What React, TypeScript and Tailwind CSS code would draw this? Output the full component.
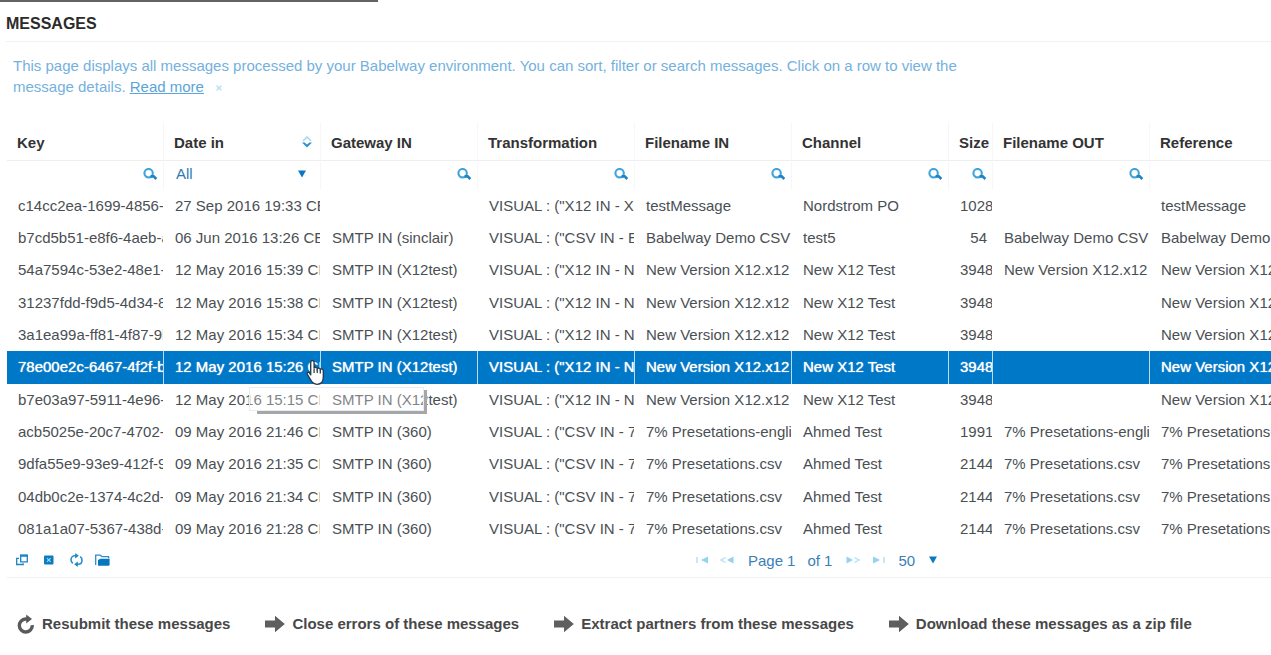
import React from "react";

type Message = {
  key: string;
  date: string;
  gateway: string;
  transformation: string;
  fileIn: string;
  channel: string;
  size: string;
  fileOut: string;
  reference: string;
};

const X12 = "New Version X12.x12";

function row(
  key: string,
  date: string,
  gateway: string,
  transformation: string,
  fileIn: string,
  channel: string,
  size: string,
  fileOut: string,
  reference: string,
): Message {
  return { key, date, gateway, transformation, fileIn, channel, size, fileOut, reference };
}

const messages: Message[] = [
  row("c14cc2ea-1699-4856-", "27 Sep 2016 19:33 CE", "", 'VISUAL : ("X12 IN - X', "testMessage", "Nordstrom PO", "1028", "", "testMessage"),
  row("b7cd5b51-e8f6-4aeb-a", "06 Jun 2016 13:26 CE", "SMTP IN (sinclair)", 'VISUAL : ("CSV IN - E', "Babelway Demo CSV", "test5", "54", "Babelway Demo CSV", "Babelway Demo"),
  row("54a7594c-53e2-48e1-", "12 May 2016 15:39 CE", "SMTP IN (X12test)", 'VISUAL : ("X12 IN - N', X12, "New X12 Test", "3948", X12, "New Version X12"),
  row("31237fdd-f9d5-4d34-8", "12 May 2016 15:38 CE", "SMTP IN (X12test)", 'VISUAL : ("X12 IN - N', X12, "New X12 Test", "3948", "", "New Version X12"),
  row("3a1ea99a-ff81-4f87-9b", "12 May 2016 15:34 CE", "SMTP IN (X12test)", 'VISUAL : ("X12 IN - N', X12, "New X12 Test", "3948", "", "New Version X12"),
  row("78e00e2c-6467-4f2f-b", "12 May 2016 15:26 CE", "SMTP IN (X12test)", 'VISUAL : ("X12 IN - N', X12, "New X12 Test", "3948", "", "New Version X12"),
  row("b7e03a97-5911-4e96-", "12 May 2016 15:15 CE", "SMTP IN (X12test)", 'VISUAL : ("X12 IN - N', X12, "New X12 Test", "3948", "", "New Version X12"),
  row("acb5025e-20c7-4702-", "09 May 2016 21:46 CE", "SMTP IN (360)", 'VISUAL : ("CSV IN - 7', "7% Presetations-engli", "Ahmed Test", "1991", "7% Presetations-engli", "7% Presetations-"),
  row("9dfa55e9-93e9-412f-9", "09 May 2016 21:35 CE", "SMTP IN (360)", 'VISUAL : ("CSV IN - 7', "7% Presetations.csv", "Ahmed Test", "2144", "7% Presetations.csv", "7% Presetations."),
  row("04db0c2e-1374-4c2d-", "09 May 2016 21:34 CE", "SMTP IN (360)", 'VISUAL : ("CSV IN - 7', "7% Presetations.csv", "Ahmed Test", "2144", "7% Presetations.csv", "7% Presetations."),
  row("081a1a07-5367-438d-", "09 May 2016 21:28 CE", "SMTP IN (360)", 'VISUAL : ("CSV IN - 7', "7% Presetations.csv", "Ahmed Test", "2144", "7% Presetations.csv", "7% Presetations."),
];

const SELECTED = "78e00e2c-6467-4f2f-b";

const columns: { id: keyof Message; label: string; width: string }[] = [
  { id: "key", label: "Key", width: "w-[157px]" },
  { id: "date", label: "Date in", width: "w-[157px]" },
  { id: "gateway", label: "Gateway IN", width: "w-[157px]" },
  { id: "transformation", label: "Transformation", width: "w-[157px]" },
  { id: "fileIn", label: "Filename IN", width: "w-[157px]" },
  { id: "channel", label: "Channel", width: "w-[157px]" },
  { id: "size", label: "Size", width: "w-[44px]" },
  { id: "fileOut", label: "Filename OUT", width: "w-[157px]" },
  { id: "reference", label: "Reference", width: "w-[157px]" },
];

function SearchIcon() {
  return (
    <svg width="14" height="12" viewBox="0 0 14 12" fill="none" aria-hidden="true">
      <circle cx="5.6" cy="5.2" r="4.2" stroke="#3fa3dc" strokeWidth="2.1" />
      <path d="M7.6 8.4h3l2.800 2.600" stroke="#1c83c4" strokeWidth="2.6" />
    </svg>
  );
}

function SortIcon() {
  return (
    <svg width="10" height="12" viewBox="0 0 10 12" fill="none" aria-hidden="true">
      <path d="M1 5l4-4 4 4" stroke="#a5d8f1" strokeWidth="1.6" />
      <path d="M0 6.5h2.6L5 8.6l2.4-2.1H10L5 11.6z" fill="#2a94d2" />
    </svg>
  );
}

function Caret() {
  return (
    <svg width="8" height="8" viewBox="0 0 8 8" aria-hidden="true">
      <path d="M0 .5h8L4 7.5z" fill="#0a78c0" />
    </svg>
  );
}

function WindowsIcon() {
  return (
    <svg width="12" height="12" viewBox="0 0 12 12" fill="none" stroke="#1b83c6" aria-hidden="true">
      <path d="M4.700 1.500h6.600v6.300H4.700z" strokeWidth="1.300" />
      <path d="M4.100 1.600h7.800" strokeWidth="2.200" />
      <path d="M3 4.300H.700v6.200h6.500V9.200" strokeWidth="1.300" />
    </svg>
  );
}

function CloseBoxIcon() {
  return (
    <svg width="10" height="10" viewBox="0 0 10 10" aria-hidden="true">
      <rect x="0" y="0.5" width="9.5" height="9" rx="1" fill="#0a7cc4" />
      <path d="M3 3.2l3.6 3.6M6.6 3.2L3 6.8" stroke="#a6d8f5" strokeWidth="1.1" />
    </svg>
  );
}

function RefreshIcon() {
  return (
    <svg width="13" height="14" viewBox="0 0 13 14" fill="none" stroke="#2a8fce" strokeWidth="1.600" aria-hidden="true">
      <path d="M6.500 2.700H5C2.500 2.700 1 4.600 1 6.800c0 1.500.700 2.700 1.800 3.500" />
      <path d="M6.500 11.300H8c2.500 0 4-1.900 4-4.100 0-1.500-.700-2.700-1.800-3.500" />
      <path d="M5.200 0L8.800 2.700 5.200 5.400z" fill="#1b86c8" stroke="none" />
      <path d="M7.800 14L4.200 11.300l3.600-2.700z" fill="#1b86c8" stroke="none" />
    </svg>
  );
}

function FolderIcon() {
  return (
    <svg width="15" height="12" viewBox="0 0 15 12" aria-hidden="true">
      <path d="M.7 11V1.2h4.6L7 2.7h6.6v1.6" fill="none" stroke="#2a8fce" strokeWidth="1.3" />
      <path d="M3 11.8V6l2.4-1.2H14.6v6.2l-.8.8z" fill="#0577c0" />
    </svg>
  );
}

function ResubmitIcon() {
  return (
    <svg width="18" height="20" viewBox="0 0 18 20" fill="none" aria-hidden="true">
      <path d="M11 5H8.600A6.500 6.500 0 1 0 15.300 11.200" stroke="#5a5a5a" strokeWidth="3.400" />
      <path d="M9.200 .4l5.800 4.600L9.200 9.400z" fill="#5a5a5a" />
    </svg>
  );
}

function ArrowIcon() {
  return (
    <svg width="20" height="18" viewBox="0 0 20 18" aria-hidden="true">
      <path d="M0 5.500h10V.800L19.800 9 10 17.200v-4.700H0z" fill="#5f5f5f" />
    </svg>
  );
}

function HandCursor() {
  return (
    <svg width="18" height="25" viewBox="0 1 16 22" aria-hidden="true">
      <path
        d="M4.200 14.500V3.200c0-2.400 3-2.400 3 0v5c.6-1.300 2.700-1 2.800.5.700-1.100 2.500-.8 2.700.6.800-.9 2.700-.5 2.700 1.200v5.600c0 3.800-2 6.400-5.500 6.400-3.200 0-4.600-1.500-5.800-4L1.200 13.600c-.8-1.700 1.100-2.500 2-1.200z"
        fill="#fff"
        stroke="#26384a"
        strokeWidth="1.200"
      />
      <path d="M7.200 8.500v4M10 9v3.500M12.700 9.800v3" stroke="#26384a" strokeWidth="1.100" fill="none" />
    </svg>
  );
}

function PagerIcon({ d, line }: { d: string; line: string }) {
  return (
    <svg width="14" height="8" viewBox="0 0 14 8" fill="none" aria-hidden="true">
      <path d={d} fill="#94d1f2" />
      <path d={line} stroke="#b5dff5" strokeWidth="1.400" />
    </svg>
  );
}

function FilterCell({ id, label }: { id: string; label: string }) {
  if (id === "reference") {
    return <input type="text" aria-label={`Filter ${label}`} className="block h-5 w-full min-w-0 outline-none" />;
  }
  if (id === "date") {
    return (
      <div className="flex items-center pl-[12px] pr-[14px]">
        <select aria-label="Filter Date in" className="min-w-0 flex-1 appearance-none bg-transparent text-[#2c7bb6] outline-none">
          <option>All</option>
        </select>
        <Caret />
      </div>
    );
  }
  return (
    <div className="flex items-center justify-end pr-[6px]">
      {id !== "size" && (
        <input type="text" aria-label={`Filter ${label}`} className="h-5 min-w-0 flex-1 bg-transparent outline-none" />
      )}
      <button type="button" aria-label={`Search ${label}`}>
        <SearchIcon />
      </button>
    </div>
  );
}

const actions = [
  "Resubmit these messages",
  "Close errors of these messages",
  "Extract partners from these messages",
  "Download these messages as a zip file",
];

export default function App() {
  return (
    <main className="overflow-hidden bg-white font-['Liberation_Sans',Arial,sans-serif] text-[15px] leading-[21px] text-[#4a4f54]">
      <div className="h-[2px] w-[378px] bg-[#666264]" />
      <header className="ml-[6px] border-b border-[#f1f1f1] pt-[11px] pb-[7px]">
        <h1 className="text-[16px] font-bold text-[#2b2b2b]">MESSAGES</h1>
      </header>

      <p className="ml-[13px] max-w-[955px] pt-[13px] text-[#74b1dd]">
        This page displays all messages processed by your Babelway environment. You can sort, filter or search
        messages. Click on a row to view the message details.{" "}
        <a href="#more" className="text-[#5ba5d8] underline">
          Read more
        </a>
        <button type="button" aria-label="Dismiss" className="ml-[12px] align-middle">
          <svg width="6" height="6" viewBox="0 0 6 6" aria-hidden="true">
            <path d="M.5.5l5 5M5.500.5l-5 5" stroke="#b5dff5" strokeWidth="1.200" />
          </svg>
        </button>
      </p>

      <section className="relative mt-[25px] ml-[7px]">
        <table className="w-[1300px] table-fixed border-separate border-spacing-0">
          <thead>
            <tr className="h-[39px]">
              {columns.map((c) => (
                <th
                  key={c.id}
                  scope="col"
                  className={`${c.width} border-r border-b border-r-[#f7f7f7] border-b-[#eeeeee] p-0 pt-[2px] pl-[10px] text-left font-bold whitespace-nowrap text-[#333333]`}
                >
                  <div className="flex items-center justify-between pr-[8px]">
                    {c.label}
                    {c.id === "date" && <SortIcon />}
                  </div>
                </th>
              ))}
            </tr>
            <tr className="h-[29px]">
              {columns.map((c) => (
                <td key={c.id} className="border-r border-[#f7f7f7] p-0 pb-[4px]">
                  <FilterCell id={c.id} label={c.label} />
                </td>
              ))}
            </tr>
          </thead>
          <tbody>
            {messages.map((m) => {
              const selected = m.key === SELECTED;
              return (
                <tr
                  key={m.key}
                  aria-selected={selected}
                  className={`h-[32px] nth-[3n]:h-[33px] ${selected ? "bg-[#0078c8] text-white [text-shadow:0_0_1px_#ffffff]" : ""}`}
                >
                  {columns.map((c) => (
                    <td
                      key={c.id}
                      className={`overflow-hidden border-r p-0 pb-[2px] pl-[11px] whitespace-nowrap ${selected ? "border-[#b9dcf2]" : "border-white"} ${c.id === "size" ? "pr-[5px] text-right" : ""}`}
                    >
                      {m[c.id]}
                    </td>
                  ))}
                </tr>
              );
            })}
          </tbody>
        </table>

        <div className="pointer-events-none absolute top-[265px] left-[242px] h-[27px] w-[178px]">
          <div className="absolute right-0 bottom-0 h-[24px] w-[170px] border-r-[3px] border-b-[3px] border-[#a4a6aa]" />
          <div className="absolute top-0 left-0 h-[24px] w-[175px] border border-[#e6edf3] bg-white/30" />
        </div>
        <div className="pointer-events-none absolute top-[238px] left-[299px]">
          <HandCursor />
        </div>

        <div className="flex h-[33px] items-center border-b border-[#f1f1f1] pb-[2px] text-[#3a7fb8]">
          <div className="flex w-[688px] items-center pl-[9px]">
            <button type="button" aria-label="Open in window"><WindowsIcon /></button>
            <button type="button" aria-label="Clear filters" className="ml-[16px]"><CloseBoxIcon /></button>
            <button type="button" aria-label="Refresh" className="ml-[16px]"><RefreshIcon /></button>
            <button type="button" aria-label="Open folder" className="ml-[12px]"><FolderIcon /></button>
          </div>
          <button type="button" aria-label="First page"><PagerIcon d="M13 .5v7L6 4z" line="M2 1v6" /></button>
          <button type="button" aria-label="Previous page" className="ml-[11px]"><PagerIcon d="M13.500 .5v7L7 4z" line="M5.500 1.500L1 4l4.500 2.500" /></button>
          <span className="ml-[14px]">Page</span>
          <span className="ml-[4px]">1</span>
          <span className="ml-[12px]">of 1</span>
          <button type="button" aria-label="Next page" className="ml-[14px]"><PagerIcon d="M.5 .5v7L7 4z" line="M8.500 1.500L13 4 8.500 6.500" /></button>
          <button type="button" aria-label="Last page" className="ml-[12px]"><PagerIcon d="M1 .5v7L8 4z" line="M12 1v6" /></button>
          <label className="ml-[12px] flex items-center">
            <select aria-label="Rows per page" className="w-[31px] appearance-none bg-transparent outline-none">
              <option>50</option>
            </select>
            <Caret />
          </label>
        </div>
      </section>

      <nav className="mt-[35px] ml-[17px] flex items-center gap-[35px] pb-[20px] whitespace-nowrap">
        {actions.map((label, i) => (
          <button key={label} type="button" className="flex items-center gap-[7px] font-bold text-[#484848]">
            {i === 0 ? <ResubmitIcon /> : <ArrowIcon />}
            {label}
          </button>
        ))}
      </nav>
    </main>
  );
}
